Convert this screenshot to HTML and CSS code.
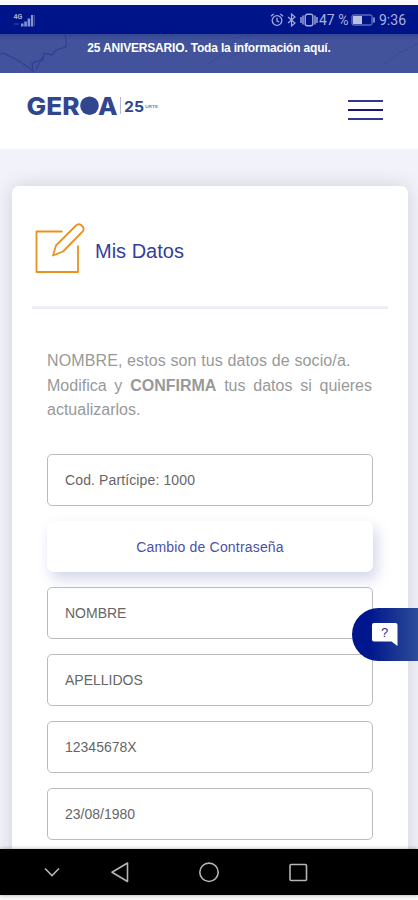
FILE: index.html
```html
<!DOCTYPE html>
<html lang="es">
<head>
    <meta charset="UTF-8">
    <meta name="viewport" content="width=device-width, initial-scale=1.0">
    <title>Geroa - Mis Datos</title>
    <link rel="stylesheet" href="styles.css">
</head>
<body>
    <div class="phone">
        <div class="status-bar">
            <svg class="signal" width="24" height="16" viewBox="0 0 24 16">
                <text x="0.500" y="7" class="signal-label">4G</text>
                <path d="M8 14.500v-3h2.500v3zM11.300 14.500v-5h2.500v5zM14.600 14.500v-8h2.500v8zM17.900 14.500v-11.500h2.300v11.500z" fill="#8794d2"/>
                <path d="M1 12h5M21.500 3v11" stroke="#3a4aa8" fill="none"/>
            </svg>
            <div class="status-icons">
                <svg width="14" height="14" viewBox="0 0 14 14" fill="none" stroke="#a3acdc" stroke-width="1.300">
                    <circle cx="7" cy="7.500" r="4.800"/>
                    <path d="M7 4.800V8l2.200 1M1 3.300L3.600 1M13 3.300L10.400 1"/>
                </svg>
                <svg class="bluetooth" width="9" height="14" viewBox="0 0 9 14" fill="none" stroke="#a3acdc" stroke-width="1.200">
                    <path d="M1 4l7 6-3.500 3V1L8 4l-7 6"/>
                </svg>
                <svg class="vibrate" width="18" height="14" viewBox="0 0 18 14" fill="none" stroke="#a3acdc" stroke-width="1.400">
                    <rect x="5.200" y="1.300" width="7.600" height="11.400" rx="2"/>
                    <path d="M3 2.500v9M15 2.500v9M1 4v6M17 4v6"/>
                </svg>
                <span class="percent">47 %</span>
                <svg class="battery" width="25" height="12" viewBox="0 0 25 12">
                    <rect x="1" y="1" width="20" height="10" rx="1.500" fill="none" stroke="#8994d0"/>
                    <rect x="2" y="2" width="9" height="8" fill="#b9c0e4"/>
                    <path d="M23 3.500v5" stroke="#a3acdc" stroke-width="1.500"/>
                </svg>
                <span class="clock">9:36</span>
            </div>
        </div>

        <a class="banner">
            <svg class="banner-lines" width="418" height="39" viewBox="0 0 418 39" fill="none" stroke="#2e4295" stroke-width="1.300">
                <path d="M-2 21l5-2 14 7 8 5 8 6-1-8 11-3 1-7 8 2 4-5 10-3V4l-2-3M43 22l-7 14"/>
                <path d="M208 30l20-14 7-12 14-3-6 15-14 8M385 30l14-11 19-9" stroke-width="1" opacity=".45"/>
            </svg>
            <span>25 ANIVERSARIO. Toda la información aquí.</span>
        </a>

        <header class="header">
            <svg class="logo" width="136" height="36" viewBox="0 -6 136 36">
                <text x="0.500" y="19.500" class="logo-name" textLength="53" lengthAdjust="spacingAndGlyphs">GER</text>
                <circle cx="63.500" cy="10.700" r="9.300" fill="#31468f"/>
                <text x="72" y="19.500" class="logo-name" textLength="19.500" lengthAdjust="spacingAndGlyphs">A</text>
                <path d="M94.500 2v17" stroke="#b4bbd6"/>
                <text x="98" y="16.500" class="logo-years" textLength="20" lengthAdjust="spacingAndGlyphs">25</text>
                <text x="119" y="12.500" class="logo-small" textLength="13" lengthAdjust="spacingAndGlyphs">URTE</text>
            </svg>
            <div class="menu">
                <span></span>
                <span></span>
                <span></span>
            </div>
        </header>

        <main class="content">
            <div class="card">
                <div class="card-title">
                    <svg width="52" height="52" viewBox="0 0 52 52" fill="none" stroke="#e9921f" stroke-width="1.800" stroke-linejoin="round">
                        <path d="M28.500 9.500H2.500v40.500h41.500V23.500"/>
                        <path d="M19 33.500l3-10L41.500 4c2.500-2.500 5-1.700 6.700 0s2 4 0 6L29 29.500z"/>
                    </svg>
                    <h1>Mis Datos</h1>
                </div>
                <div class="intro">
                    <p class="line-1">NOMBRE, estos son tus datos de socio/a.</p>
                    <p class="line-2">Modifica y <b>CONFIRMA</b> tus datos si quieres actualizarlos.</p>
                </div>
                <form class="form">
                    <div class="field code">Cod. Partícipe: 1000</div>
                    <div class="button">Cambio de Contraseña</div>
                    <div class="field">NOMBRE</div>
                    <div class="field">APELLIDOS</div>
                    <div class="field">12345678X</div>
                    <div class="field">23/08/1980</div>
                </form>
            </div>
        </main>

        <!-- floating help tab -->
        <div class="help">
            <svg width="28" height="26" viewBox="0 0 28 26">
                <path d="M3 1h21.500a2 2 0 0 1 2 2v21l-6-4.500H3a2 2 0 0 1-2-2V3a2 2 0 0 1 2-2z" fill="#fff"/>
                <text x="13.500" y="15" text-anchor="middle" class="help-mark">?</text>
            </svg>
        </div>

        <nav class="nav-bar">
            <svg width="418" height="46" viewBox="0 0 418 46" fill="none" stroke="#b5b5b5" stroke-width="1.600">
                <path d="M45 19.500l7 7 7-7"/>
                <path d="M127.500 14v18.500L112 23.200z" stroke-linejoin="round"/>
                <circle cx="209" cy="23.300" r="9.200"/>
                <rect x="290" y="15.500" width="16.500" height="16" rx="1"/>
            </svg>
        </nav>
    </div>
</body>
</html>
```
FILE: styles.css
```css
* {
    box-sizing: border-box;
}
body {
    margin: 0;
    background-color: #f9f9f9;
    font-family: "Liberation Sans", Arial, sans-serif;
}
.phone {
    position: relative;
    display: flex;
    flex-direction: column;
    width: 418px;
    height: 900px;
    padding: 5px 0;
    overflow: hidden;
}
.status-bar {
    display: flex;
    flex: none;
    align-items: center;
    justify-content: space-between;
    height: 29px;
    padding: 1px 12px 0 13px;
    background-color: #001489;
    color: #a9b2de;
    font-family: Roboto, sans-serif;
    font-size: 14px;
}
.signal-label {
    font: bold 7px Roboto, sans-serif;
    fill: #a3acdc;
}
.status-icons {
    display: flex;
    align-items: center;
}
.bluetooth {
    margin-left: 3px;
}
.vibrate {
    margin: 0 1px 0 4px;
}
.percent {
    width: 31px;
    white-space: nowrap;
}
.battery {
    margin: 0 3px 0 1px;
}
.clock {
    width: 27px;
}
.banner {
    position: relative;
    display: flex;
    flex: none;
    justify-content: center;
    height: 39px;
    padding-top: 7px;
    background: linear-gradient(#344692, #42539c 6px, #42539c);
    color: #fff;
    font-size: 12px;
    font-weight: bold;
    line-height: 14px;
    letter-spacing: -0.18px;
}
.banner-lines {
    position: absolute;
    top: 0;
    left: 0;
}
.banner span {
    position: relative;
}
.header {
    display: flex;
    flex: none;
    align-items: flex-start;
    justify-content: space-between;
    height: 76px;
    padding: 16px 35px 0 26px;
    background-color: #fff;
}
.logo-name {
    font: 800 24px Inter, sans-serif;
    fill: #31468f;
}
.logo-years {
    font: bold 15px Inter, sans-serif;
    fill: #31468f;
}
.logo-small {
    font: bold 4.500px Lato, sans-serif;
    fill: #7380b2;
}
.menu {
    display: flex;
    flex-direction: column;
    gap: 7px;
    width: 35px;
    padding-top: 11px;
}
.menu span {
    height: 2px;
    background-color: #37338f;
}
.menu span:nth-child(2) {
    background-color: #1c147c;
}
.content {
    flex: 1;
    min-height: 0;
    padding: 37px 10px 0 12px;
    background-color: #f2f2fa;
    overflow: hidden;
}
.card {
    height: 760px;
    padding: 36px 20px 0;
    border-radius: 7px;
    background-color: #fff;
    box-shadow: 0 0 20px rgba(0, 0, 0, 0.14);
}
.card-title {
    display: flex;
    height: 87px;
    padding-left: 2px;
    border-bottom: 3px solid #eeeefa;
}
.card-title h1 {
    margin: 17px 0 0 9px;
    color: #33409a;
    font-size: 20px;
    font-weight: normal;
    line-height: 24px;
}
.intro {
    height: 145px;
    padding: 40px 16px 0 15px;
    color: #999;
    font-size: 16px;
    line-height: 24.500px;
}
.intro p {
    margin: 0;
    text-align: justify;
}
.line-1 {
    letter-spacing: 0.120px;
}
.form {
    display: flex;
    flex-direction: column;
    gap: 15px;
    padding: 0 15px;
}
.field,
.button {
    flex: none;
    height: 52px;
    border-radius: 5px;
    font-size: 14px;
    line-height: 51px;
}
.field {
    padding-left: 17px;
    border: 1px solid #bcbcbc;
    color: #666;
}
.code {
    letter-spacing: 0.120px;
}
.button {
    height: 51px;
    border-radius: 7px;
    background-color: #fff;
    box-shadow: 4px 7px 14px rgba(55, 70, 160, 0.22);
    color: #4a50a6;
    letter-spacing: 0.180px;
    line-height: 52px;
    text-align: center;
}
.help {
    position: absolute;
    top: 608px;
    right: 0;
    width: 66px;
    height: 53px;
    padding: 14px 0 0 19px;
    border-radius: 27px 0 0 27px;
    background: linear-gradient(90deg, #00168c 25%, #2d4c99);
}
.help-mark {
    font: 13px "Liberation Sans", sans-serif;
    fill: #2a3090;
}
.nav-bar {
    position: relative;
    flex: none;
    height: 46px;
    background-color: #000;
    box-shadow: 0 0 4px rgba(0, 0, 0, 0.35);
}
```
